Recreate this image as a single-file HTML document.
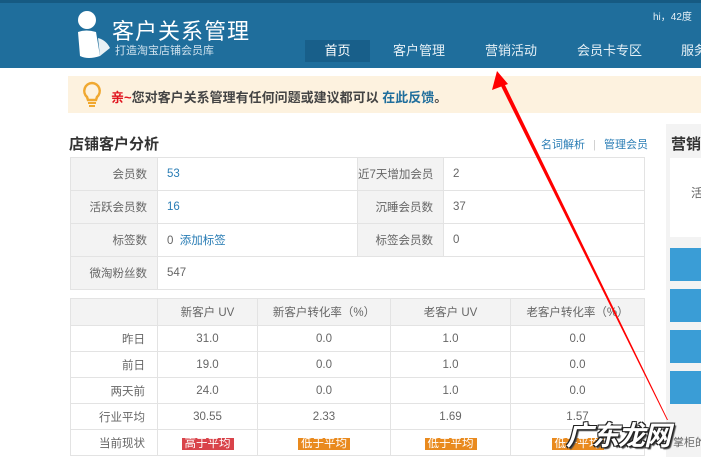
<!DOCTYPE html>
<html><head><meta charset="utf-8">
<style>
*{margin:0;padding:0;box-sizing:border-box}
body{width:701px;height:457px;overflow:hidden;background:#fff;font-family:"Liberation Sans","Noto Sans CJK SC",sans-serif;font-size:12px;color:#555;position:relative}
.hd{position:absolute;left:0;top:0;width:701px;height:68px;background:#1f6e9c;border-top:3px solid #165a82}
.abs{position:absolute;white-space:nowrap}
.nav{position:absolute;top:40px;height:22px;line-height:22px;color:#e6f0f6;font-size:13px;white-space:nowrap}
table{border-collapse:collapse;position:absolute;table-layout:fixed}
td{border:1px solid #e3e3e3;font-size:11.5px;color:#666;white-space:nowrap;overflow:hidden}
.t1 td{height:33px}
.t1 .l{background:#f3f3f3;text-align:right;padding-right:10px}
.t1 .v{padding-left:9px}
.blue{color:#2a7db5}
.t2 td{height:26px;text-align:center}
.t2 tr:first-child td{background:#f3f3f3;height:27px}
.t2 td.r{text-align:right;padding-right:12px}
.tag{color:#fff;padding:0 3px;font-size:11.5px}
.btn{position:absolute;left:670px;width:31px;height:33px;background:#3a9dd6}
</style></head><body>
<div class="hd"></div>
<svg class="abs" style="left:74px;top:10px" width="40" height="50" viewBox="0 0 40 50">
<circle cx="13" cy="10" r="9" fill="#fff"/>
<path d="M4 22 Q12 19 22 22 L26 46 Q14 50 6 46 Z" fill="#fff"/>
<path d="M24 28 Q32 30 36 38 L26 46 Z" fill="#fff" opacity=".9"/>
</svg>
<div class="abs" style="left:112px;top:14px;font-size:22px;color:#fff;letter-spacing:1px">客户关系管理</div>
<div class="abs" style="left:115px;top:42px;font-size:11px;color:#cfe2ee">打造淘宝店铺会员库</div>
<div class="abs" style="left:653px;top:8px;font-size:10px;color:#e6f0f6">hi，42度</div>
<div class="nav" style="left:305px;width:65px;background:#185f8a;text-align:center;color:#fff">首页</div>
<div class="nav" style="left:393px">客户管理</div>
<div class="nav" style="left:485px">营销活动</div>
<div class="nav" style="left:577px">会员卡专区</div>
<div class="nav" style="left:681px">服务</div>
<div class="abs" style="left:68px;top:76px;width:633px;height:37px;background:#fdf2df"></div>
<svg class="abs" style="left:81px;top:81px" width="22" height="26" viewBox="0 0 22 26">
<path d="M11 2 A8 8 0 0 1 16 16 L15 19 L7 19 L6 16 A8 8 0 0 1 11 2 Z" fill="none" stroke="#f0a830" stroke-width="2.5"/>
<rect x="7" y="21" width="8" height="2" fill="#f0a830"/><rect x="8" y="24" width="6" height="2" fill="#f0a830"/>
</svg>
<div class="abs" style="left:111px;top:87px;font-size:13px;color:#444;font-weight:bold"><span style="color:#e0141e">亲~</span>您对客户关系管理有任何问题或建议都可以 <span style="color:#1f6e9c">在此反馈</span>。</div>
<div class="abs" style="left:69px;top:133px;font-size:15px;color:#333;font-weight:bold">店铺客户分析</div>
<div class="abs" style="left:541px;top:136px;font-size:11px;color:#2a7db5">名词解析 <span style="color:#ccc;margin:0 5px">|</span> 管理会员</div>
<table class="t1" style="left:70px;top:157px;width:575px">
<col style="width:87px"><col style="width:200px"><col style="width:86px"><col>
<tr><td class="l">会员数</td><td class="v blue">53</td><td class="l">近7天增加会员</td><td class="v">2</td></tr>
<tr><td class="l">活跃会员数</td><td class="v blue">16</td><td class="l">沉睡会员数</td><td class="v">37</td></tr>
<tr><td class="l">标签数</td><td class="v">0 &nbsp;<span class="blue">添加标签</span></td><td class="l">标签会员数</td><td class="v">0</td></tr>
<tr><td class="l">微淘粉丝数</td><td class="v" colspan="3">547</td></tr>
</table>
<table class="t2" style="left:70px;top:298px;width:575px">
<col style="width:87px"><col style="width:100px"><col style="width:133px"><col style="width:120px"><col>
<tr><td></td><td>新客户 UV</td><td>新客户转化率（%）</td><td>老客户 UV</td><td>老客户转化率（%）</td></tr>
<tr><td class="r">昨日</td><td>31.0</td><td>0.0</td><td>1.0</td><td>0.0</td></tr>
<tr><td class="r">前日</td><td>19.0</td><td>0.0</td><td>1.0</td><td>0.0</td></tr>
<tr><td class="r">两天前</td><td>24.0</td><td>0.0</td><td>1.0</td><td>0.0</td></tr>
<tr><td class="r">行业平均</td><td>30.55</td><td>2.33</td><td>1.69</td><td>1.57</td></tr>
<tr><td class="r">当前现状</td><td><span class="tag" style="background:#d9434a">高于平均</span></td><td><span class="tag" style="background:#e98a1e">低于平均</span></td><td><span class="tag" style="background:#e98a1e">低于平均</span></td><td><span class="tag" style="background:#e98a1e">低于平均</span></td></tr>
</table>
<div class="abs" style="left:666px;top:124px;width:35px;height:333px;background:#f3f3f3"></div>
<div class="abs" style="left:671px;top:133px;font-size:15px;color:#333;font-weight:bold">营销</div>
<div class="abs" style="left:670px;top:158px;width:31px;height:79px;background:#fff"></div>
<div class="abs" style="left:691px;top:184px;font-size:12px;color:#666">活</div>
<div class="btn" style="top:248px"></div><div class="btn" style="top:289px"></div>
<div class="btn" style="top:330px"></div><div class="btn" style="top:371px"></div>
<div class="abs" style="left:673px;top:434px;font-size:11px;color:#666">掌柜的</div>
<svg class="abs" style="left:0;top:0" width="701" height="457">
<polygon points="500,84 504,83 668,420 667,420" fill="#f00"/>
<polygon points="497,71 492,90 508,84" fill="#f00"/>
</svg>
<div class="abs" style="left:566px;top:414px;font-size:27px;font-weight:bold;font-style:italic;color:#fff;letter-spacing:-1px;text-shadow:-1px -1px 0 #222,1px -1px 0 #222,-1px 1px 0 #222,1px 1px 0 #222,2px 2px 1px #444">广东龙网</div>
</body></html>
